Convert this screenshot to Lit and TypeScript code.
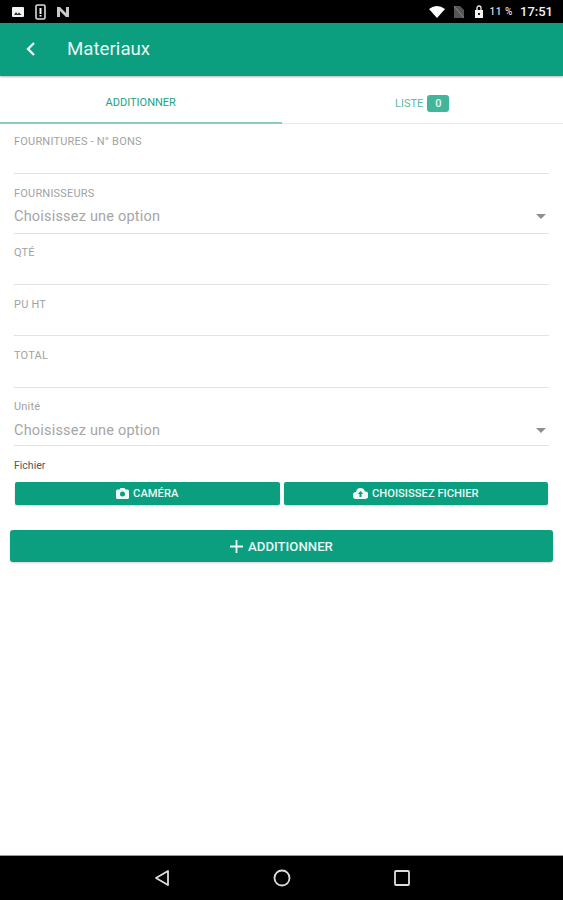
import { LitElement, html, css } from 'lit';
import { customElement } from 'lit/decorators.js';

@customElement('app-root')
export class AppRoot extends LitElement {
  static styles = css`
    :host {
      --green: #0b9e7f;
      display: flex;
      flex-direction: column;
      width: 563px;
      height: 900px;
      background: #fff;
      font-family: Roboto, "Liberation Sans", sans-serif;
      overflow: hidden;
    }
    * { box-sizing: border-box; }
    svg { display: block; flex: none; }

    .status {
      height: 23px;
      flex: none;
      background: #000;
      display: flex;
      align-items: center;
      padding: 0 10px 0 11px;
      color: #f2f2f2;
    }
    .status .left { display: flex; align-items: center; gap: 10px; }
    .status .right { display: flex; align-items: center; margin-left: auto; }
    .sim { margin-left: 8px; }
    .lock { margin-left: 9px; }
    .pct { font-size: 10px; font-weight: 500; margin: 0 7px 0 5px; letter-spacing: .6px; color: #ddd; }
    .time { font-size: 13px; font-weight: 500; }

    .toolbar {
      height: 53px;
      flex: none;
      background: var(--green);
      box-shadow: 0 1px 2px rgba(0,0,0,.3);
      display: flex;
      align-items: center;
      padding: 0 0 1px 25px;
      color: #fff;
      position: relative;
    }
    .toolbar .title { font-size: 18.7px; margin-left: 31px; color: #e6f6f2; font-weight: 400; }

    .tabs {
      height: 48px;
      flex: none;
      display: flex;
      border-bottom: 1px solid #e9e9e9;
    }
    .tab {
      flex: 1;
      display: flex;
      align-items: center;
      justify-content: center;
      gap: 4px;
      font-size: 11px;
      color: #1aa386;
      margin-bottom: -1px;
      padding-top: 7px;
    }
    .tab.active { border-bottom: 2px solid #86cfbd; }
    .tab.other { color: #58b9a3; }
    .badge {
      width: 22px;
      height: 17px;
      border-radius: 3px;
      background: #43b59b;
      color: #e8f7f3;
      font-size: 11px;
      font-weight: 500;
      display: flex;
      align-items: center;
      justify-content: center;
    }

    .form { padding: 11px 14px 0; }
    .field {
      border-bottom: 1px solid #e3e3e3;
      display: flex;
      flex-direction: column;
      font-size: 11px;
      letter-spacing: .2px;
      color: #a2a2a2;
    }
    .field .label { height: 14px; line-height: 14px; }
    .field .value {
      display: flex;
      align-items: center;
      justify-content: space-between;
      font-size: 14.5px;
      letter-spacing: .2px;
      color: #a6a6a6;
      height: 26px;
      margin-top: 3px;
      padding-right: 3px;
    }
    .caret {
      width: 0;
      height: 0;
      border-left: 5px solid transparent;
      border-right: 5px solid transparent;
      border-top: 5px solid #8f8f8f;
    }
    .f1 { height: 39px; margin-bottom: 13px; }
    .f2 { height: 47px; margin-bottom: 12px; }
    .f2 .value { margin-top: 2px; }
    .f3 { height: 39px; margin-bottom: 13px; }
    .f4 { height: 38px; margin-bottom: 13px; }
    .f5 { height: 39px; margin-bottom: 12px; }
    .f6 { height: 46px; margin-bottom: 13px; }

    .file-label { font-size: 10.5px; color: #555; height: 14px; line-height: 14px; }
    .file-buttons {
      display: flex;
      gap: 4px;
      margin: 9px 1px 0;
    }
    .btn {
      background: var(--green);
      color: #e9f7f4;
      border-radius: 2px;
      display: flex;
      align-items: center;
      justify-content: center;
      font-weight: 500;
      box-shadow: 0 1px 2px rgba(0,0,0,.18);
    }
    .file-buttons .btn {
      flex: 1;
      height: 23px;
      gap: 4px;
      font-size: 11.2px;
    }
    .add {
      height: 32px;
      margin: 25px 10px 0;
      gap: 5px;
      font-size: 13.2px;
      border-radius: 3px;
    }

    .spacer { flex: 1; }
    .nav {
      height: 45px;
      flex: none;
      background: #000;
      border-top: 1px solid #999;
      display: flex;
      align-items: center;
      justify-content: center;
      gap: 103px;
    }
  `;

  private renderField(cls: string, label: string, option = false) {
    return html`
      <div class="field ${cls}">
        <div class="label">${label}</div>
        ${option
          ? html`<div class="value">Choisissez une option<span class="caret"></span></div>`
          : ''}
      </div>
    `;
  }

  render() {
    return html`
      <div class="status">
        <div class="left">
          <svg width="14" height="14" viewBox="0 0 14 14">
            <path fill="#f2f2f2" d="M2 2h10a1 1 0 0 1 1 1v8a1 1 0 0 1-1 1H2a1 1 0 0 1-1-1V3a1 1 0 0 1 1-1z"/>
            <path fill="#333" d="M3 10l2-3 1.500 2 1.500-1.500L10.500 10z"/>
          </svg>
          <svg width="11" height="16" viewBox="0 0 11 16">
            <rect x="1" y="1" width="9" height="14" rx="1.500" fill="none" stroke="#ddd" stroke-width="1.600"/>
            <rect x="4.500" y="4" width="2" height="6" fill="#f2f2f2"/>
            <rect x="4.500" y="11" width="2" height="1.500" fill="#f2f2f2"/>
          </svg>
          <svg width="14" height="12" viewBox="0 0 14 12">
            <path fill="#c8c8c8" d="M1 1h3l6 6V1h3v10h-3L4 5v6H1z"/>
          </svg>
        </div>
        <div class="right">
          <svg width="16" height="12" viewBox="0 0 16 12"><path fill="#fff" d="M0 3Q8-3 16 3L8 12z"/></svg>
          <svg class="sim" width="12" height="14" viewBox="0 0 12 14">
            <path fill="#555" d="M1 1h6l4 4v8H1z"/>
            <path stroke="#888" stroke-width="1" d="M1 1l10 12"/>
          </svg>
          <svg class="lock" width="10" height="14" viewBox="0 0 10 14">
            <path fill="#f2f2f2" d="M1 5h8v8H1z"/>
            <path fill="none" stroke="#f2f2f2" stroke-width="1.300" d="M3 5V3a2 2 0 0 1 4 0v2"/>
            <rect x="4" y="8" width="2" height="2" fill="#222"/>
          </svg>
          <span class="pct">11 %</span>
          <span class="time">17:51</span>
        </div>
      </div>

      <div class="toolbar">
        <svg width="11" height="16" viewBox="0 0 11 16">
          <path fill="none" stroke="#eef9f6" stroke-width="2.400" d="M9 2L3 8l6 6"/>
        </svg>
        <span class="title">Materiaux</span>
      </div>

      <div class="tabs">
        <div class="tab active">ADDITIONNER</div>
        <div class="tab other">LISTE <span class="badge">0</span></div>
      </div>

      <div class="form">
        ${this.renderField('f1', 'FOURNITURES - N° BONS')}
        ${this.renderField('f2', 'FOURNISSEURS', true)}
        ${this.renderField('f3', 'QTÉ')}
        ${this.renderField('f4', 'PU HT')}
        ${this.renderField('f5', 'TOTAL')}
        ${this.renderField('f6', 'Unité', true)}
        <div class="file-label">Fichier</div>
        <div class="file-buttons">
          <div class="btn">
            <svg width="13" height="11" viewBox="0 0 13 11">
              <path fill="#eef9f6" fill-rule="evenodd" d="M4.500 0h4l1 1.500h2A1.500 1.500 0 0 1 13 3v6.500A1.500 1.500 0 0 1 11.500 11h-10A1.500 1.500 0 0 1 0 9.500V3a1.500 1.500 0 0 1 1.500-1.500h2zM6.500 3.500a2.500 2.500 0 1 0 0 5 2.500 2.500 0 0 0 0-5z"/>
            </svg>
            CAMÉRA
          </div>
          <div class="btn">
            <svg width="15" height="11" viewBox="0 0 15 11">
              <path fill="#eef9f6" fill-rule="evenodd" d="M7.500 0a4.500 4.500 0 0 1 4.300 3.200A3.900 3.900 0 0 1 11.500 11H3.500A3.500 3.500 0 0 1 3 4 4.700 4.700 0 0 1 7.500 0zM7.500 3L4.800 6h1.700v3h2V6h1.700z"/>
            </svg>
            CHOISISSEZ FICHIER
          </div>
        </div>
      </div>

      <div class="btn add">
        <svg width="13" height="13" viewBox="0 0 13 13">
          <path stroke="#eef9f6" stroke-width="1.800" d="M6.500 0v13M0 6.500h13"/>
        </svg>
        ADDITIONNER
      </div>

      <div class="spacer"></div>

      <div class="nav">
        <svg width="16" height="18" viewBox="0 0 16 18">
          <path fill="none" stroke="#ddd" stroke-width="1.800" stroke-linejoin="round" d="M14 2v14L2 9z"/>
        </svg>
        <svg width="18" height="18" viewBox="0 0 18 18">
          <circle cx="9" cy="9" r="7.500" fill="none" stroke="#ddd" stroke-width="1.800"/>
        </svg>
        <svg width="16" height="16" viewBox="0 0 16 16">
          <rect x="1" y="1" width="14" height="14" rx="1" fill="none" stroke="#ddd" stroke-width="1.800"/>
        </svg>
      </div>
    `;
  }
}
